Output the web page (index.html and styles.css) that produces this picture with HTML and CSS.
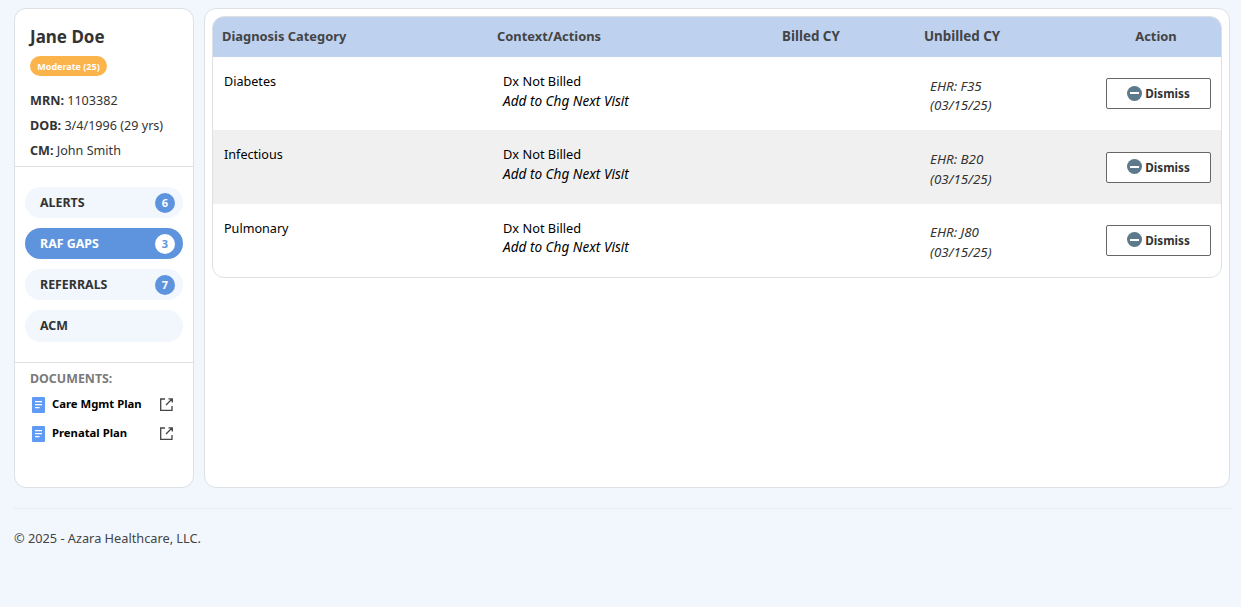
FILE: index.html
```html
<!DOCTYPE html>
<html lang="en">
<head>
<meta charset="utf-8">
<title>RAF Gaps</title>
<link rel="stylesheet" href="styles.css">
</head>
<body>
<div class="layout">
  <aside class="side card">
    <div class="patient">
      <h1 class="name">Jane Doe</h1>
      <span class="risk">Moderate (25)</span>
      <p class="fact"><b>MRN:</b> 1103382</p>
      <p class="fact"><b>DOB:</b> 3/4/1996 (29 yrs)</p>
      <p class="fact"><b>CM:</b> John Smith</p>
    </div>
    <nav class="nav">
      <a class="pill"><span>ALERTS</span><i class="count">6</i></a>
      <a class="pill active"><span>RAF GAPS</span><i class="count">3</i></a>
      <a class="pill"><span>REFERRALS</span><i class="count">7</i></a>
      <a class="pill"><span>ACM</span></a>
    </nav>
    <div class="docs">
      <h2 class="docs-title">DOCUMENTS:</h2>
      <div class="doc">
        <svg class="doc-icon" viewBox="0 0 13 16"><path fill="#5f9bf5" d="M1 0h11a1 1 0 0 1 1 1v14a1 1 0 0 1-1 1H1a1 1 0 0 1-1-1V1a1 1 0 0 1 1-1z"/><path fill="#fff" d="M3 4h7v1.3H3zM3 7h7v1.3H3zM3 10h4.500v1.300H3z"/></svg>
        <span class="doc-name">Care Mgmt Plan</span>
        <svg class="ext" viewBox="0 0 13 13"><path fill="none" stroke="#444" stroke-width="1.300" d="M5 1H.7v11.300H12V8M12 1L6 7M8.500 .8H12.300V4.500"/></svg>
      </div>
      <div class="doc">
        <svg class="doc-icon" viewBox="0 0 13 16"><path fill="#5f9bf5" d="M1 0h11a1 1 0 0 1 1 1v14a1 1 0 0 1-1 1H1a1 1 0 0 1-1-1V1a1 1 0 0 1 1-1z"/><path fill="#fff" d="M3 4h7v1.3H3zM3 7h7v1.3H3zM3 10h4.500v1.300H3z"/></svg>
        <span class="doc-name">Prenatal Plan</span>
        <svg class="ext" viewBox="0 0 13 13"><path fill="none" stroke="#444" stroke-width="1.300" d="M5 1H.7v11.300H12V8M12 1L6 7M8.500 .8H12.300V4.500"/></svg>
      </div>
    </div>
  </aside>
  <main class="main card">
    <div class="table">
      <div class="row head">
        <div>Diagnosis Category</div>
        <div>Context/Actions</div>
        <div class="wide">Billed CY</div>
        <div class="wide">Unbilled CY</div>
        <div class="c-action">Action</div>
      </div>
      <div class="row">
        <div class="c-cat">Diabetes</div>
        <div class="c-ctx">Dx Not Billed<em>Add to Chg Next Visit</em></div>
        <div></div>
        <div class="c-ehr"><em>EHR: F35<br>(03/15/25)</em></div>
        <div class="c-btn"><button class="dismiss"><i class="minus"></i>Dismiss</button></div>
      </div>
      <div class="row alt">
        <div class="c-cat">Infectious</div>
        <div class="c-ctx">Dx Not Billed<em>Add to Chg Next Visit</em></div>
        <div></div>
        <div class="c-ehr"><em>EHR: B20<br>(03/15/25)</em></div>
        <div class="c-btn"><button class="dismiss"><i class="minus"></i>Dismiss</button></div>
      </div>
      <div class="row">
        <div class="c-cat">Pulmonary</div>
        <div class="c-ctx">Dx Not Billed<em>Add to Chg Next Visit</em></div>
        <div></div>
        <div class="c-ehr"><em>EHR: J80<br>(03/15/25)</em></div>
        <div class="c-btn"><button class="dismiss"><i class="minus"></i>Dismiss</button></div>
      </div>
    </div>
  </main>
</div>
<footer class="foot">© 2025 - Azara Healthcare, LLC.</footer>
</body>
</html>
```
FILE: styles.css
```css
* { box-sizing: border-box; }
html, body { height: 100%; }
body {
  margin: 0;
  padding: 8px 9px 0 14px;
  background: #f2f6fd;
  color: #333;
  font-family: "Noto Sans", sans-serif;
  font-size: 13px;
  overflow: hidden;
}
.layout { display: flex; gap: 10px; height: 480px; padding-right: 2px; }
.card { background: #fff; border: 1px solid #dde0e4; border-radius: 12px; }
.side { width: 180px; flex: none; }
.patient { padding: 16px 15px 0; height: 158px; border-bottom: 1px solid #dde0e4; }
.name { margin: 0 0 7px; font-size: 17px; line-height: 24px; font-weight: 700; }
.risk {
  display: block; width: 77px; height: 20px; line-height: 20px; padding-top: 1px; text-align: center;
  background: #fbb34c; color: #fff; border-radius: 10px; font-size: 9px; font-weight: 700;
}
.fact { margin: 0; height: 25px; line-height: 25px; white-space: nowrap; font-size: 12.6px; }
.fact:first-of-type { margin-top: 12px; }
.fact b { font-weight: 700; }
.nav { padding: 20px 10px 20px; display: flex; flex-direction: column; gap: 10px; border-bottom: 1px solid #dde0e4; height: 196px; }
.pill {
  display: flex; justify-content: space-between; align-items: center;
  height: 31px; padding: 0 8px 0 15px; border-radius: 16px;
  background: #f2f6fd; font-size: 12.4px; font-weight: 700; color: #333;
}
.pill:last-child { height: 32px; padding-bottom: 2px; }
.pill.active { background: #5e94dd; color: #fff; }
.count {
  width: 20px; height: 20px; line-height: 20px; text-align: center; border-radius: 50%;
  background: #5e94dd; color: #fff; font-style: normal; font-size: 11px; font-weight: 700;
}
.active .count { background: #fff; color: #5e94dd; }
.docs { padding: 8px 15px 0; }
.docs-title { margin: 0 0 3px; font-size: 12.4px; line-height: 16px; color: #7a7a7a; font-weight: 700; }
.doc { display: flex; align-items: center; height: 29px; padding-left: 2px; color: #000; }
.doc-icon { width: 13px; height: 16px; flex: none; margin-right: 7px; }
.doc-name { flex: 1; font-size: 11.3px; font-weight: 700; white-space: nowrap; position: relative; top: -1px; }
.ext { width: 13px; height: 13px; flex: none; margin-right: 5px; }
.main { flex: 1; padding: 7px; margin-right: 1px; }
.table { border: 1px solid #dde0e4; border-radius: 12px; overflow: hidden; }
.row { display: grid; grid-template-columns: 275px 285px 142px 176px 1fr; height: 73.4px; }
.head { height: 41px; background: #bed1ef; font-weight: 700; font-size: 12.9px; color: #444; align-items: center; margin: -1px -1px 0; padding-bottom: 2px; }
.head > div { padding-left: 10px; }
.head > .wide { font-size: 13.4px; }
.head > .c-action { padding: 0; text-align: center; }
.alt { background: #f0f0f0; }
.c-cat { padding: 16px 0 0 11px; color: #000; font-size: 12.6px; }
.c-ctx { padding: 15px 0 0 15px; color: #000; line-height: 19.5px; font-size: 12.8px; }
.c-ctx em { display: block; font-size: 13.6px; line-height: 18px; }
.c-ehr { padding: 19.7px 0 0 15px; line-height: 19.5px; color: #333; font-size: 13.4px; }
.c-btn { padding: 21.2px 10px 0 15px; }
.dismiss {
  display: flex; align-items: center; justify-content: center; gap: 3px;
  width: 105px; height: 31px; background: #fff; border: 1px solid #666; border-radius: 2px;
  font: 700 11.7px "Noto Sans", sans-serif; color: #333; padding: 0 0 1px;
}
.minus { width: 15px; height: 15px; border-radius: 50%; background: #5c7a8c; position: relative; }
.minus::after { content: ""; position: absolute; left: 3px; right: 3px; top: 6.5px; height: 2px; background: #fff; }
.foot { margin-top: 20px; border-top: 1px solid #e8ebef; padding-top: 20px; line-height: 18px; font-size: 12.75px; color: #444; }
```
